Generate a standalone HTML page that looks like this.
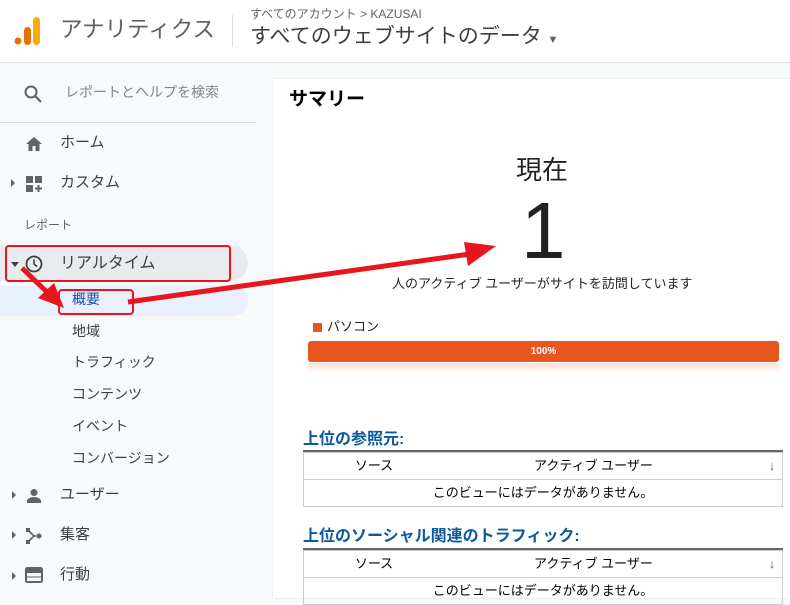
<!DOCTYPE html><html><head><meta charset="utf-8"><style>
body{margin:0;width:790px;height:598px;overflow:hidden;background:#f8f9fa;font-family:"Liberation Sans","Noto Sans CJK JP",sans-serif;position:relative;color:#5f6368}
.a{position:absolute;white-space:nowrap;line-height:1.32}
.hdr{position:absolute;left:0;top:0;width:790px;height:62px;background:#fff;border-bottom:1px solid #dadce0}
.main{position:absolute;left:273px;top:79px;width:517px;height:519px;background:#fff;box-shadow:0 0 2px rgba(0,0,0,.12)}
.nav{font-size:15px;color:#3c4043}
.tri{position:absolute;width:0;height:0;border-top:4px solid transparent;border-bottom:4px solid transparent;border-left:4px solid #5f6368}
table{border-collapse:collapse;position:absolute;left:303px;width:480px;font-size:13px;color:#000;table-layout:fixed}
td{border:1px solid #ccc;height:26px;padding:0;line-height:26px;text-align:center}
</style></head><body>
<div class="hdr"></div>
<svg class="a" style="left:14px;top:16px" width="28" height="30"><circle cx="4" cy="25" r="3.5" fill="#e37400"/><rect x="10" y="11" width="7" height="18" rx="3.5" fill="#e37400"/><rect x="19" y="1" width="7" height="28" rx="3.5" fill="#f9ab00"/></svg>
<div class="a" style="left:60px;top:15px;font-size:22.5px;color:#5f6368">アナリティクス</div>
<div class="a" style="left:232px;top:15px;width:1px;height:32px;background:#dadce0"></div>
<div class="a" style="left:250px;top:7px;font-size:12px;color:#5f6368">すべてのアカウント &gt; KAZUSAI</div>
<div class="a" style="left:250px;top:23px;font-size:21px;color:#3c4043">すべてのウェブサイトのデータ <span style="font-size:11px;color:#5f6368">▼</span></div>
<svg class="a" style="left:23px;top:84px" width="20" height="20"><circle cx="8" cy="8" r="5.5" fill="none" stroke="#5f6368" stroke-width="2"/><path d="M12 12l6 6" stroke="#5f6368" stroke-width="2.2"/></svg>
<div class="a" style="left:65px;top:83px;font-size:14px;color:#80868b">レポートとヘルプを検索</div>
<div class="a" style="left:0;top:122px;width:256px;height:1px;background:#dadce0"></div>
<svg class="a" style="left:25px;top:136px" width="18" height="16"><path d="M9 1L1 8h2.5v7h4v-5h3v5h4V8H17z" fill="#5f6368"/></svg>
<div class="a nav" style="left:60px;top:133px">ホーム</div>
<div class="tri" style="left:11px;top:179px"></div>
<svg class="a" style="left:25px;top:175px" width="18" height="18"><rect x="1" y="1" width="7" height="7" fill="#5f6368"/><rect x="10" y="1" width="7" height="7" fill="#5f6368"/><rect x="1" y="10" width="7" height="7" fill="#5f6368"/><path d="M13.5 10v7M10 13.5h7" stroke="#5f6368" stroke-width="2"/></svg>
<div class="a nav" style="left:60px;top:173px">カスタム</div>
<div class="a" style="left:24px;top:218px;font-size:12px;color:#5f6368">レポート</div>
<div class="a" style="left:0;top:245px;width:248px;height:36px;background:#e8eaed;border-radius:0 18px 18px 0"></div>
<div class="a" style="left:0;top:286px;width:248px;height:30px;background:#e8f0fe;border-radius:0 15px 15px 0"></div>
<div class="a" style="left:5px;top:245px;width:222px;height:33px;border:2px solid #e8161c;border-radius:4px"></div>
<div class="a" style="left:11px;top:262px;width:0;height:0;border-left:4px solid transparent;border-right:4px solid transparent;border-top:5px solid #3c4043"></div>
<svg class="a" style="left:25px;top:255px" width="18" height="18"><circle cx="9" cy="9" r="7.5" fill="none" stroke="#3c4043" stroke-width="1.8"/><path d="M9 4.5V9l3 2.5" fill="none" stroke="#3c4043" stroke-width="1.6"/></svg>
<div class="a nav" style="left:60px;top:253px;font-size:16px">リアルタイム</div>
<div class="a" style="left:58px;top:289px;width:72px;height:22px;border:2px solid #e8161c;border-radius:4px"></div>
<div class="a" style="left:72px;top:290px;font-size:14px;color:#1a4fb3">概要</div>
<div class="a nav" style="left:72px;top:322px;font-size:14px">地域</div>
<div class="a nav" style="left:72px;top:353px;font-size:14px">トラフィック</div>
<div class="a nav" style="left:72px;top:385px;font-size:14px">コンテンツ</div>
<div class="a nav" style="left:72px;top:417px;font-size:14px">イベント</div>
<div class="a nav" style="left:72px;top:449px;font-size:14px">コンバージョン</div>
<div class="tri" style="left:12px;top:491px"></div>
<svg class="a" style="left:26px;top:488px" width="16" height="16"><circle cx="8" cy="4.5" r="3.5" fill="#5f6368"/><path d="M1 15v-2c0-2.5 4-4 7-4s7 1.5 7 4v2z" fill="#5f6368"/></svg>
<div class="a nav" style="left:60px;top:485px">ユーザー</div>
<div class="tri" style="left:12px;top:531px"></div>
<svg class="a" style="left:26px;top:528px" width="16" height="16"><rect x="0" y="0" width="4" height="4" fill="#5f6368"/><rect x="0" y="12" width="4" height="4" fill="#5f6368"/><circle cx="13" cy="8" r="2.5" fill="#5f6368"/><path d="M2 2l6 6-6 6M8 8h5" fill="none" stroke="#5f6368" stroke-width="1.6"/></svg>
<div class="a nav" style="left:60px;top:525px">集客</div>
<div class="tri" style="left:12px;top:572px"></div>
<svg class="a" style="left:25px;top:567px" width="18" height="16"><rect x="1" y="1" width="16" height="14" rx="1.5" fill="none" stroke="#5f6368" stroke-width="2"/><rect x="1" y="1" width="16" height="5" fill="#5f6368"/><path d="M1 10h16" stroke="#5f6368"/></svg>
<div class="a nav" style="left:60px;top:565px">行動</div>
<div class="main"></div>
<div class="a" style="left:289px;top:87px;font-size:19px;font-weight:bold;color:#000">サマリー</div>
<div class="a" style="left:516px;top:153px;font-size:26px;color:#222">現在</div>
<div class="a" style="left:521px;top:186px;font-size:80px;color:#222;line-height:90px">1</div>
<div class="a" style="left:392px;top:275px;font-size:13px;color:#222">人のアクティブ ユーザーがサイトを訪問しています</div>
<div class="a" style="left:313px;top:323px;width:9px;height:9px;background:#e8561f"></div>
<div class="a" style="left:327px;top:318px;font-size:13px;color:#222">パソコン</div>
<div class="a" style="left:308px;top:341px;width:471px;height:21px;background:#e8561f;border-radius:3px;color:#fff;font-size:10px;font-weight:bold;text-align:center;line-height:21px">100%</div>
<div class="a" style="left:308px;top:363px;width:471px;height:10px;background:linear-gradient(#fde0d4,#fff)"></div>
<div class="a" style="left:303px;top:429px;font-size:16px;font-weight:bold;color:#0b5a9e">上位の参照元:</div>
<div class="a" style="left:303px;top:450px;width:480px;height:2px;background:#666"></div>
<table style="top:452px"><tr><td style="width:140px;border-right:none">ソース</td><td style="border-left:none;border-right:none;text-align:left;padding-left:90px">アクティブ ユーザー</td><td style="width:20px;border-left:none;color:#666">↓</td></tr><tr><td colspan="3">このビューにはデータがありません。</td></tr></table>
<div class="a" style="left:303px;top:526px;font-size:16px;font-weight:bold;color:#0b5a9e">上位のソーシャル関連のトラフィック:</div>
<div class="a" style="left:303px;top:548px;width:480px;height:2px;background:#666"></div>
<table style="top:550px"><tr><td style="width:140px;border-right:none">ソース</td><td style="border-left:none;border-right:none;text-align:left;padding-left:90px">アクティブ ユーザー</td><td style="width:20px;border-left:none;color:#666">↓</td></tr><tr><td colspan="3">このビューにはデータがありません。</td></tr></table>
<svg class="a" style="left:0;top:0" width="790" height="598"><path d="M128 302L470 254" stroke="#e8161c" stroke-width="5"/><path d="M496 246L464 242L468 266Z" fill="#e8161c"/><path d="M22 268L50 295" stroke="#e8161c" stroke-width="5"/><path d="M64 308L38 298L54 283Z" fill="#e8161c"/></svg>
</body></html>
